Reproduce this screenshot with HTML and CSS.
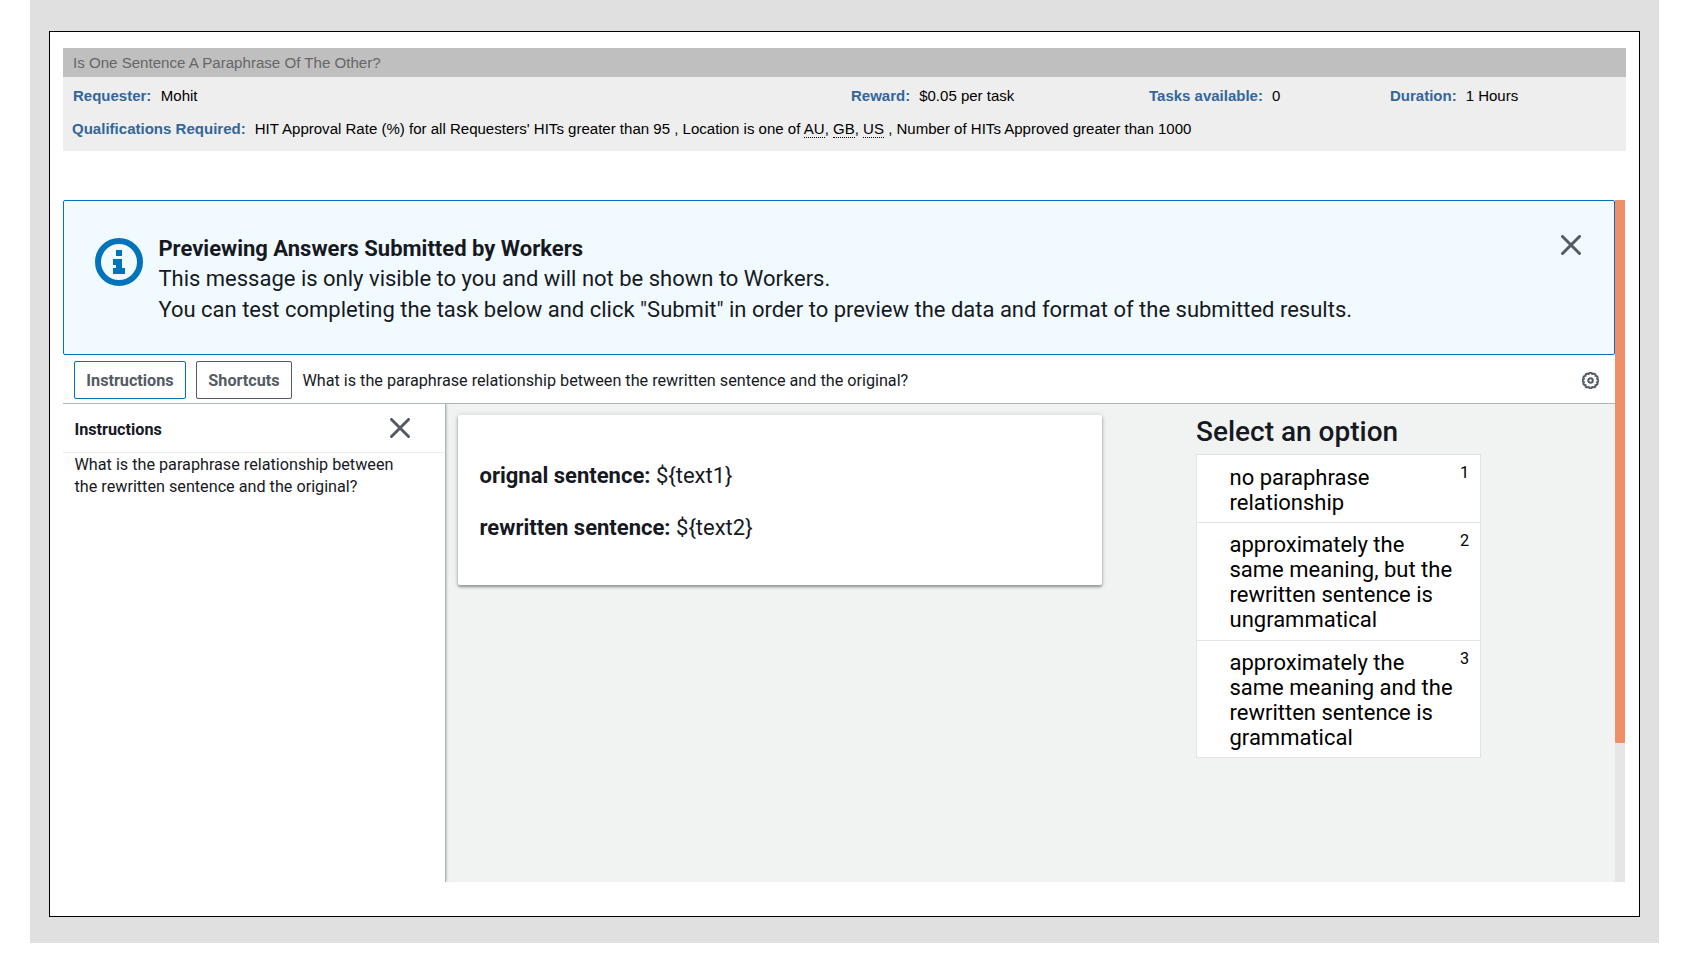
FILE: index.html
```html
<!DOCTYPE html>
<html lang="en">
<head>
<meta charset="utf-8">
<title>Is One Sentence A Paraphrase Of The Other?</title>
<link rel="stylesheet" href="styles.css">
</head>
<body>
<div class="backdrop">
  <main class="frame">
    <header class="hit">
      <h1 class="hit-title">Is One Sentence A Paraphrase Of The Other?</h1>
      <div class="hit-info">
        <div class="hit-row">
          <div class="requester"><b>Requester:</b><span>Mohit</span></div>
          <div class="reward"><b>Reward:</b><span>$0.05 per task</span></div>
          <div class="tasks"><b>Tasks available:</b><span>0</span></div>
          <div class="duration"><b>Duration:</b><span>1 Hours</span></div>
        </div>
        <div class="quals"><b>Qualifications Required:</b><span>HIT Approval Rate (%) for all Requesters' HITs greater than 95 , Location is one of <abbr title="Australia">AU</abbr>, <abbr title="United Kingdom">GB</abbr>, <abbr title="United States">US</abbr> , Number of HITs Approved greater than 1000</span></div>
      </div>
    </header>
    <div class="preview">
      <div class="content">
        <section class="alert">
          <svg class="info-icon" viewBox="0 0 48 48"><circle cx="24" cy="24" r="21" fill="none" stroke="#0073bb" stroke-width="6"/><path fill="#0073bb" d="M21 12h6v6h-6zM18 21h9v9h3v6H18v-6h3v-3h-3z"/></svg>
          <div class="alert-text"><b>Previewing Answers Submitted by Workers</b><p>This message is only visible to you and will not be shown to Workers.</p><p>You can test completing the task below and click "Submit" in order to preview the data and format of the submitted results.</p></div>
          <svg class="close" viewBox="0 0 20 20"><path d="M1.500 1.500l17 17M18.500 1.500l-17 17"/></svg>
        </section>
        <nav class="toolbar">
          <button class="btn active">Instructions</button>
          <button class="btn">Shortcuts</button>
          <span class="question">What is the paraphrase relationship between the rewritten sentence and the original?</span>
          <svg class="gear" viewBox="0.500 0.500 15 15"><path d="M6.500 2.200Q8-.4 9.500 2.200Q12.700 1.300 12.400 3.800Q15 4.200 13.900 6.500Q16.400 8 13.900 9.500Q15 11.800 12.400 12.200Q12.700 14.700 9.500 13.800Q8 16.400 6.500 13.800Q3.300 14.700 3.600 12.200Q1 11.800 2.100 9.500Q-.4 8 2.100 6.500Q1 4.200 3.600 3.800Q3.300 1.300 6.500 2.200Z"/><circle cx="8" cy="8" r="2"/></svg>
        </nav>
        <div class="workspace">
          <aside class="side">
            <div class="side-head"><b>Instructions</b><svg class="close" viewBox="0 0 20 20"><path d="M1.500 1.500l17 17M18.500 1.500l-17 17"/></svg></div>
            <p class="side-body">What is the paraphrase relationship between the rewritten sentence and the original?</p>
          </aside>
          <section class="card">
            <p><b>orignal sentence:</b> ${text1}</p>
            <p><b>rewritten sentence:</b> ${text2}</p>
          </section>
          <section class="select">
            <h2>Select an option</h2>
            <ul class="options">
              <li><span class="label">no paraphrase relationship</span><span class="key">1</span></li>
              <li><span class="label">approximately the same meaning, but the rewritten sentence is ungrammatical</span><span class="key">2</span></li>
              <li><span class="label">approximately the same meaning and the rewritten sentence is grammatical</span><span class="key">3</span></li>
            </ul>
          </section>
        </div>
      </div>
      <div class="scrollbar"><div class="thumb"></div></div>
    </div>
  </main>
</div>
</body>
</html>
```
FILE: styles.css
```css
* { box-sizing: border-box; }
body { margin: 0; background: #fff; color: #000; font-family: "Liberation Sans", Arial, sans-serif; font-size: 15px; overflow: hidden; }
p, h1, h2, ul { margin: 0; padding: 0; }
.backdrop { width: 1629px; height: 943px; margin-left: 30px; padding: 31px 19px 26px; background: #e0e0e0; }
.frame { height: 886px; padding: 16px 13px 0; border: 1px solid #000; background: #fff; }
.hit-title { height: 29px; padding-left: 10px; background: #bfbfbf; color: #666; font-size: 15.1px; font-weight: 400; line-height: 30px; }
.hit-info { height: 74px; padding: 9px 10px 0; background: #eee; line-height: 20px; }
.hit-info b { margin-right: 9px; color: #369; }
.hit-info .requester b { margin-right: 9.5px; }
.hit-row { display: grid; grid-template-columns: 778px 298px 241px 1fr; height: 33px; }
.quals { margin-left: -1px; white-space: nowrap; font-size: 15.04px; }
.quals abbr { border-bottom: 1px dotted #000; text-decoration: none; }
.preview { display: flex; width: 1562px; height: 682px; margin-top: 49px; color: #16191f; font-family: Roboto, sans-serif; }
.content { width: 1552px; }
.scrollbar { width: 10px; background: #e6e6e6; }
.thumb { height: 543px; border-radius: 0 0 1px 1px; background: #ef8e67; }
.alert { display: flex; height: 155px; padding: 33px 33px 0 31px; border: 1px solid #0073bb; border-radius: 2px; background: #f1faff; font-size: 22px; line-height: 30.4px; }
.info-icon { width: 48px; height: 48px; margin: 4px 15.4px 0 0; }
.alert-text { flex: 1; white-space: nowrap; }
.close { width: 20px; height: 20px; fill: none; stroke: #545b64; stroke-width: 3; stroke-linecap: round; }
.alert .close { margin-top: 1px; }
.toolbar { display: flex; align-items: center; height: 49px; padding: 1px 16px 0 11px; border-bottom: 1px solid #aab7b8; font-size: 16.2px; }
.btn { width: 112px; height: 38px; margin-right: 10px; padding: 1px 0 0; border: 1px solid #545b64; border-radius: 2px; background: #fff; color: #545b64; font: 700 16.2px Roboto, sans-serif; }
.btn.active { border-color: #0073bb; }
.btn + .btn { width: 96px; }
.question { flex: 1; padding: 2px 0 0 .4px; }
.gear { width: 17px; height: 17px; margin-top: 2px; fill: none; stroke: #545b64; stroke-width: 1.8; }
.workspace { display: flex; height: 478px; background: #f1f3f3; }
.side { width: 382px; background: #fff; box-shadow: 1px 0 1px #aab7b8, 1px 0 3px rgba(0,28,36,.3); clip-path: inset(0 -6px 0 0); }
.side-head { display: flex; justify-content: space-between; height: 49px; padding: 15px 35px 0 11.5px; border-bottom: 1px solid #eaeded; font-size: 16.2px; line-height: 22px; }
.side-head .close { margin-top: -1px; }
.side-body { width: 350px; padding: 1px 0 0 11.5px; font-size: 16.2px; line-height: 22px; }
.card { width: 644px; height: 170px; margin: 11px 0 0 13px; padding: 45px 21.5px; border-radius: 2px; background: #fff; box-shadow: 0 2px 3px rgba(0,0,0,.38), 0 0 6px rgba(0,0,0,.12); font-size: 22px; line-height: 32px; }
.card p + p { margin-top: 20px; }
.select { width: 285px; margin: 10px 0 0 94px; }
.select h2 { height: 40px; font-size: 28px; font-weight: 500; line-height: 36px; white-space: nowrap; }
.options { list-style: none; border: 1px solid #e1e4e4; color: #000; }
.options li { display: flex; padding: 9px 11px 8px 32.5px; background: #fff; font-size: 22px; line-height: 25px; }
.options li:first-child { padding: 10px 11px 7px 32.5px; }
.options li:last-child { padding-bottom: 7px; }
.options li + li { border-top: 1px solid #e1e4e4; }
.label { width: 231px; }
.key { flex: 1; font-size: 16.2px; line-height: 16px; text-align: right; }
.options li + li .key { padding-top: 1px; }
```
